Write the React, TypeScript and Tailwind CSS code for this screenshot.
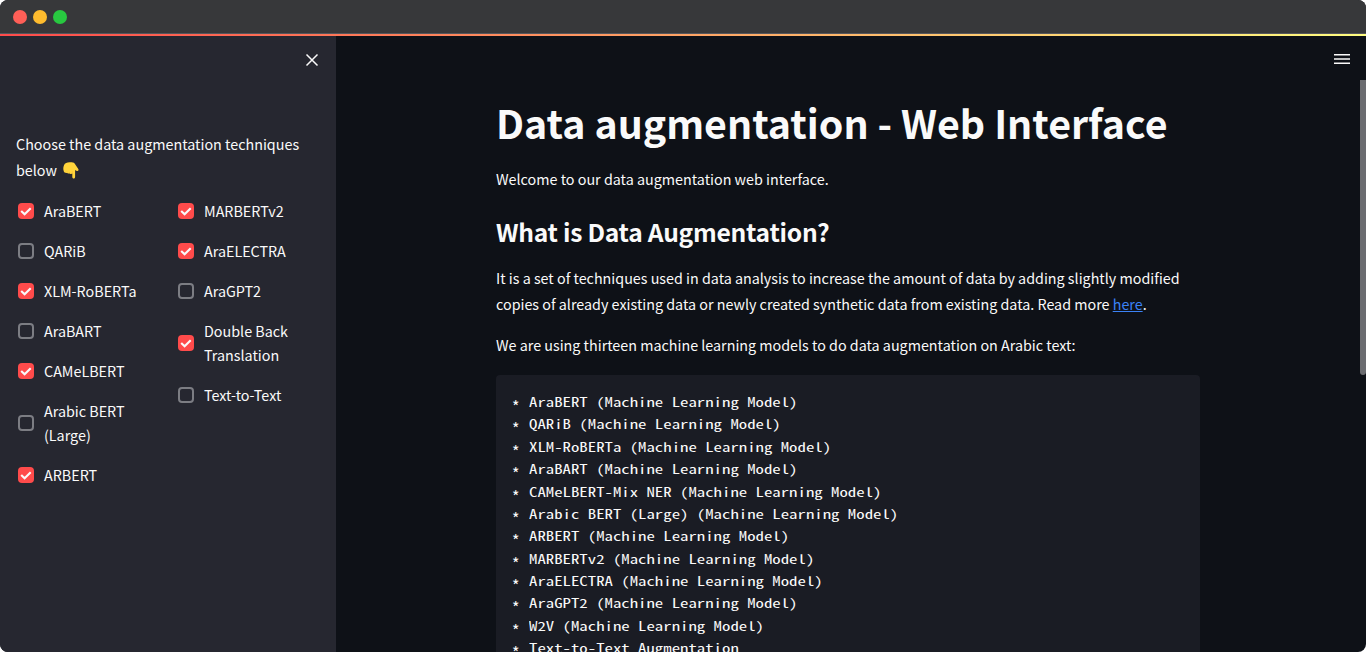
import React from "react";

type Option = { label: string; checked: boolean };

const leftOptions: Option[] = [
  { label: "AraBERT", checked: true },
  { label: "QARiB", checked: false },
  { label: "XLM-RoBERTa", checked: true },
  { label: "AraBART", checked: false },
  { label: "CAMeLBERT", checked: true },
  { label: "Arabic BERT (Large)", checked: false },
  { label: "ARBERT", checked: true },
];

const rightOptions: Option[] = [
  { label: "MARBERTv2", checked: true },
  { label: "AraELECTRA", checked: true },
  { label: "AraGPT2", checked: false },
  { label: "Double Back Translation", checked: true },
  { label: "Text-to-Text", checked: false },
];

const models = [
  "AraBERT (Machine Learning Model)",
  "QARiB (Machine Learning Model)",
  "XLM-RoBERTa (Machine Learning Model)",
  "AraBART (Machine Learning Model)",
  "CAMeLBERT-Mix NER (Machine Learning Model)",
  "Arabic BERT (Large) (Machine Learning Model)",
  "ARBERT (Machine Learning Model)",
  "MARBERTv2 (Machine Learning Model)",
  "AraELECTRA (Machine Learning Model)",
  "AraGPT2 (Machine Learning Model)",
  "W2V (Machine Learning Model)",
  "Text-to-Text Augmentation",
];

function Checkbox({ label, checked }: Option) {
  return (
    <label className="flex items-center">
      {checked ? (
        <span className="mx-0.5 flex size-4 shrink-0 items-center justify-center rounded bg-[#ff4b4b]">
          <svg width="16" height="16" viewBox="0 0 16 16" fill="none">
            <path d="M3.2 7.9 L6.6 11.2 L12.7 5.2" stroke="#fafafa" strokeWidth="2.1" />
          </svg>
        </span>
      ) : (
        <span className="mx-0.5 size-4 shrink-0 rounded border-2 border-[#7c7d83]" />
      )}
      <span className="pl-2 leading-6">{label}</span>
    </label>
  );
}

function PointingDown() {
  return (
    <svg className="ml-1.5 inline-block align-[-3px]" width="16" height="17" viewBox="0 0 16 17" role="img" aria-label="pointing down">
      <path
        d="M1 3.2C1.8 1.2 4 .3 6.6.3h2.1c1.8 0 2.8.8 3.6 2.2l3 4.6c.6 1 .1 1.9-.8 1.9-.9.1-1.7-.5-2.4-1.1v6.9c0 1.1-.5 1.8-1.4 1.8s-1.4-.7-1.4-1.8v-3.2c-.9.5-1.9.4-2.5-.2-.9.4-2 .2-2.5-.5C2.100 11.100.9 10.300.7 9 .1 7 .2 5 1 3.200Z"
        fill="#ffd43b"
      />
      <path d="M9.300 11.500V9.200M6.700 11.300l-.1-1.300M4.200 10.800 4 9.600" stroke="#f5b52e" strokeWidth=".5" fill="none" />
    </svg>
  );
}

export default function App() {
  return (
    <div className="h-[652px] w-[1366px] bg-white">
      <div className="flex h-full flex-col overflow-hidden rounded-lg bg-[#0e1117] font-['Noto_Sans_CJK_JP','Noto_Sans_CJK_SC',sans-serif] text-[14.33px] text-[#fafafa]">
        <header className="flex h-[33px] shrink-0 items-center gap-1.5 bg-[#37383a] pt-px pl-[13px]">
          <span className="size-3.5 rounded-full bg-[#ff5f57]" />
          <span className="size-3.5 rounded-full bg-[#febc2e]" />
          <span className="size-3.5 rounded-full bg-[#28c840]" />
        </header>
        <div className="h-px shrink-0 bg-[#54565c]" />
        <div className="h-0.5 shrink-0 bg-linear-to-r/srgb from-[#ff4b4b] to-[#fffd80]" />
        <div className="flex min-h-0 grow">
          <aside className="w-[336px] shrink-0 bg-[#262730] px-4">
            <div className="flex h-12 items-center justify-end">
              <svg width="16" height="16" viewBox="0 0 16 16" fill="none" stroke="#fafafa" strokeWidth="1.5">
                <path d="M2.500 2.500 13.500 13.500M13.500 2.500 2.500 13.500" />
              </svg>
            </div>
            <p className="mt-[47px] leading-[25.6px]">
              Choose the data augmentation techniques below<PointingDown />
            </p>
            <div className="mt-[17px] flex gap-4">
              <div className="flex w-36 flex-col gap-4">
                {leftOptions.map((o) => <Checkbox key={o.label} {...o} />)}
              </div>
              <div className="flex w-36 flex-col gap-4">
                {rightOptions.map((o) => <Checkbox key={o.label} {...o} />)}
              </div>
            </div>
          </aside>
          <main className="w-[1030px] overflow-hidden">
            <div className="flex h-11 items-center justify-end pr-4">
              <svg width="16" height="12" viewBox="0 0 16 12" className="mt-0.5">
                <path d="M0 1.750h16M0 6h16M0 10.250h16" stroke="#fafafa" strokeWidth="1.500" />
              </svg>
            </div>
            <div className="flex items-start justify-between pl-40">
              <div className="w-[704px]">
                <h1 className="mt-[15px] text-[39.35px] leading-[53px] font-bold">Data augmentation - Web Interface</h1>
                <p className="mt-[18px] leading-[25.6px]">Welcome to our data augmentation web interface.</p>
                <h2 className="mt-[22px] text-[24.6px] leading-[34px] font-bold tracking-[-0.25px]">What is Data Augmentation?</h2>
                <p className="mt-[17.4px] text-[14.325px] leading-[25.6px]">
                  It is a set of techniques used in data analysis to increase the amount of data by adding slightly modified
                  copies of already existing data or newly created synthetic data from existing data. Read more{" "}
                  <a className="text-[#3b82f6] underline">here</a>.
                </p>
                <p className="mt-4 text-[14.325px] leading-[25.6px]">We are using thirteen machine learning models to do data augmentation on Arabic text:</p>
                <div className="mt-[17.2px] rounded bg-[#1a1c24] p-4 leading-[22.4px]">
                  {models.map((m) => (
                    <div key={m} className="flex h-[22.4px]">
                      <span className="w-[16.8px] shrink-0 translate-y-1 text-[16px]">*</span>
                      <span className="w-max origin-left scale-x-[1.3375] font-['Noto_Sans_Mono_CJK_JP','Noto_Sans_Mono_CJK_SC','Liberation_Mono',monospace] text-[12.55px] whitespace-pre">
                        {m}
                      </span>
                    </div>
                  ))}
                </div>
              </div>
              <div className="h-[295px] w-1.5 rounded-b-[3px] bg-[#6b6c70]" />
            </div>
          </main>
        </div>
      </div>
    </div>
  );
}
